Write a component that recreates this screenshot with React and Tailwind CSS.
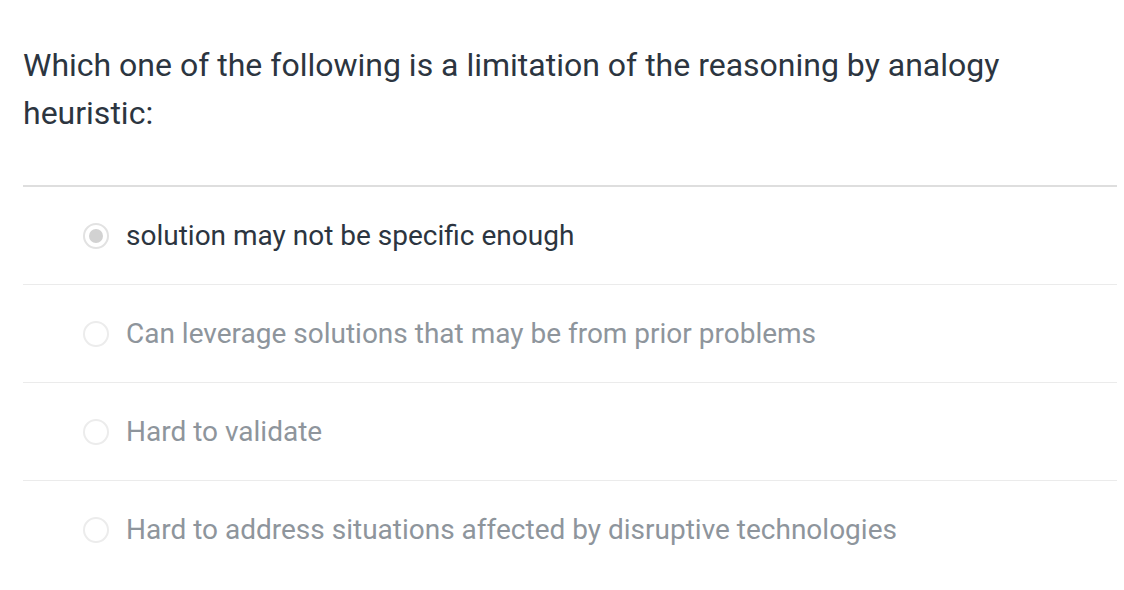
const options = [
  { label: "solution may not be specific enough", selected: true },
  { label: "Can leverage solutions that may be from prior problems" },
  { label: "Hard to validate" },
  { label: "Hard to address situations affected by disruptive technologies" },
];

function Radio({ selected }) {
  return (
    <span
      className={`flex h-[26px] w-[26px] shrink-0 items-center justify-center rounded-full border-2 ${
        selected ? "border-[#e2e2e2]" : "border-[#ececec]"
      }`}
    >
      {selected && <span className="h-[14px] w-[14px] rounded-full bg-[#d2d2d2]" />}
    </span>
  );
}

export default function App() {
  return (
    <div className="min-h-screen bg-white font-['Roboto','Liberation_Sans',sans-serif]">
      <div className="pl-[23px] pr-[7px] pt-[41px]">
        <h1 className="text-[32px] leading-[48px] text-[#2c3540]">
          Which one of the following is a limitation of the reasoning by analogy heuristic:
        </h1>

        <div className="mt-[48px] h-[2px] bg-[#dedede]" />

        {/* options */}
        <div>
          {options.map((o, i) => (
            <div
              key={o.label}
              className={`flex h-[98px] items-center gap-[17px] pl-[60px] ${
                i < options.length - 1 ? "border-b border-[#ebebeb]" : ""
              }`}
            >
              <Radio selected={o.selected} />
              <span
                className={`text-[28px] ${o.selected ? "text-[#2c3540]" : "text-[#8e959c]"}`}
              >
                {o.label}
              </span>
            </div>
          ))}
        </div>
      </div>
    </div>
  );
}
